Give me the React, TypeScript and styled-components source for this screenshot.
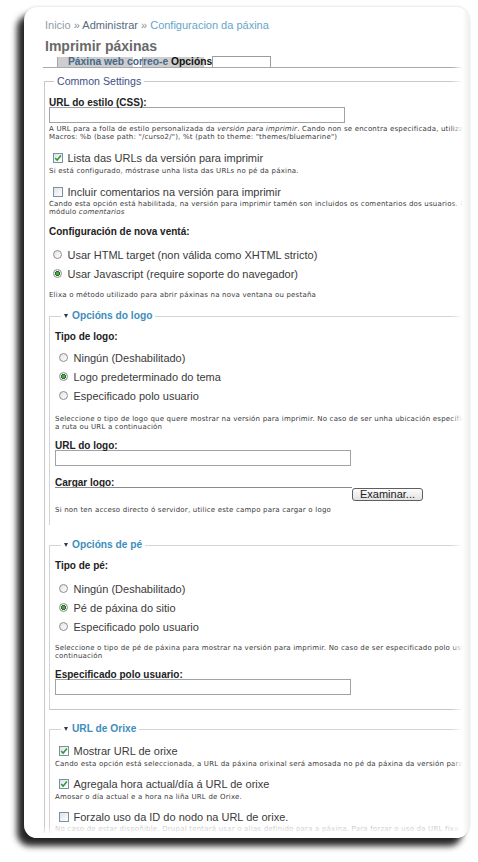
import React from 'react';
import styled, { createGlobalStyle } from 'styled-components';

const GlobalStyle = createGlobalStyle`
  html, body {
    margin: 0;
    padding: 0;
    background: #fff;
  }
  body {
    font-family: "Liberation Sans", Arial, sans-serif;
    color: #333;
  }
`;

const Page = styled.div`
  width: 478px;
  height: 862px;
  overflow: hidden;
  box-sizing: border-box;
  padding: 7px 0 0 24px;
`;

const Sheet = styled.div`
  position: relative;
  width: 445px;
  height: 831px;
  background: #fff;
  border-radius: 13px;
  overflow: hidden;
  box-shadow: -7px 8px 6px rgba(0, 0, 0, 0.85), 0 0 3px rgba(0, 0, 0, 0.2);

  &::after {
    content: '';
    position: absolute;
    top: 0;
    right: 0;
    bottom: 0;
    width: 18px;
    background: linear-gradient(to right, rgba(255, 255, 255, 0), #fff 65%, #f0f0f0);
    z-index: 2;
  }

  &::before {
    content: '';
    position: absolute;
    left: 0;
    right: 0;
    bottom: 0;
    height: 12px;
    background: linear-gradient(to bottom, rgba(255, 255, 255, 0), #fff 80%);
    z-index: 2;
  }
`;

const Content = styled.div`
  width: 520px;
  padding: 11px 0 0 20px;
`;

const Breadcrumb = styled.div`
  margin-left: 1px;
  font-size: 11px;
  line-height: 14px;
  white-space: nowrap;
  color: #8d8d8d;
`;

const Crumb = styled.span<{ $tone: 'home' | 'admin' | 'current' }>`
  color: ${(p) => (p.$tone === 'home' ? '#8e9ca8' : p.$tone === 'admin' ? '#566b7d' : '#66a6c6')};
`;

const Title = styled.h1`
  margin: 6px 0 0 1px;
  font-size: 14px;
  line-height: 16px;
  font-weight: bold;
  color: #696969;
`;

const TabBar = styled.div`
  display: flex;
  align-items: flex-end;
  height: 10px;
  margin: 3px 0 0 -1px;
  padding-left: 14px;
  border-bottom: 1px solid #a9a9a9;
`;

const TabStrip = styled.span`
  height: 10px;
  padding-left: 11px;
  font-size: 10.3px;
  font-weight: bold;
  line-height: 10px;
  white-space: nowrap;
  color: #44698a;
  background: linear-gradient(
    to right,
    #a8a8a8 0 1px,
    #cecece 1px 76px,
    transparent 76px 85px,
    #b0b0b0 85px 86px,
    #cecece 86px 147px,
    transparent 147px
  );
`;

const ActiveLabel = styled.span`
  color: #111;
`;

const ActiveTab = styled.span`
  box-sizing: border-box;
  width: 59px;
  height: 11px;
  border: 1px solid #9c9c9c;
  border-bottom: none;
  background: #fff;
`;

const Fieldset = styled.fieldset<{ $mt: number; $inner?: boolean; $pb?: number; $closed?: boolean }>`
  margin: ${(p) => p.$mt}px 0 0 0;
  padding: 0 0 ${(p) => p.$pb ?? 0}px ${(p) => (p.$inner ? 5 : 4)}px;
  min-width: 0;
  border: none;
  border-top: 1px solid ${(p) => (p.$inner ? '#d4d4d4' : '#c9c9c9')};
  border-left: 1px solid ${(p) => (p.$inner ? '#d4d4d4' : '#c9c9c9')};
  border-bottom: ${(p) => (p.$closed ? '1px solid #c6c6c6' : 'none')};
`;

const Legend = styled.legend<{ $inner?: boolean }>`
  display: flex;
  align-items: center;
  gap: 4px;
  margin-left: ${(p) => (p.$inner ? 6 : 5)}px;
  padding: 0 3px;
  height: 14px;
  font-size: ${(p) => (p.$inner ? '10.2px' : '10.6px')};
  font-weight: ${(p) => (p.$inner ? 'bold' : 'normal')};
  line-height: 14px;
  white-space: nowrap;
  color: ${(p) => (p.$inner ? '#3d8ebd' : '#3f4f86')};
`;

const Caret = styled.span`
  width: 0;
  height: 0;
  border-left: 2.5px solid transparent;
  border-right: 2.5px solid transparent;
  border-top: 4px solid #2c3b4c;
`;

const FieldLabel = styled.div<{ $mt: number }>`
  margin-top: ${(p) => p.$mt}px;
  font-size: 10px;
  font-weight: bold;
  line-height: 10px;
  white-space: nowrap;
  color: #222;
`;

const TextInput = styled.input<{ $mt?: number }>`
  display: block;
  box-sizing: border-box;
  width: 296px;
  height: 16px;
  margin: ${(p) => p.$mt ?? -1}px 0 0 0;
  padding: 0;
  border: 1px solid #9ea3a8;
  background: #fff;
`;

const Desc = styled.div<{ $mt: number; $faded?: boolean }>`
  margin-top: ${(p) => p.$mt}px;
  font-family: "DejaVu Sans", Verdana, sans-serif;
  font-size: 7px;
  line-height: 8px;
  letter-spacing: 0.2px;
  white-space: nowrap;
  color: ${(p) => (p.$faded ? '#c4c4c4' : '#3a3a3a')};

  em {
    font-style: italic;
  }
`;

const OptionList = styled.div<{ $mt: number }>`
  margin-top: ${(p) => p.$mt}px;
`;

const OptionRow = styled.label<{ $h: number; $mt?: number }>`
  display: flex;
  align-items: center;
  height: ${(p) => p.$h}px;
  margin-top: ${(p) => p.$mt ?? 0}px;
  padding-left: 3.5px;
  font-size: 11px;
  white-space: nowrap;
  color: #3a3a3a;
`;

const CheckBox = styled.span`
  display: flex;
  align-items: center;
  justify-content: center;
  box-sizing: border-box;
  width: 10px;
  height: 10px;
  margin-right: 5px;
  border: 1px solid #7d8fa3;
  background: linear-gradient(135deg, #dfe3e6, #fff);
`;

const RadioDot = styled.span<{ $on?: boolean }>`
  box-sizing: border-box;
  width: 9px;
  height: 9px;
  margin-right: 6px;
  border: 1px solid #8e8e8e;
  border-radius: 50%;
  background: ${(p) =>
    p.$on
      ? 'radial-gradient(circle, #3fae3f 0 1.5px, #2a6a2a 1.6px 2.3px, #f2f2f2 2.4px)'
      : 'linear-gradient(135deg, #e2e2e2, #fff)'};
`;

const FileRow = styled.div`
  display: flex;
  align-items: flex-start;
  margin-top: -1px;
`;

const FileField = styled.span`
  width: 297px;
  border-top: 1px solid #8a8a8a;
`;

const BrowseButton = styled.button`
  box-sizing: border-box;
  width: 71px;
  height: 13px;
  margin-top: 1px;
  padding: 0;
  border: 1px solid #5f5f5f;
  border-radius: 3px;
  background: linear-gradient(#fcfcfc, #e2e2e2);
  font-family: "Liberation Sans", Arial, sans-serif;
  font-size: 11px;
  line-height: 11px;
  color: #222;
`;

const Check = ({ on }: { on?: boolean }) => (
  <CheckBox>
    {on && (
      <svg width="8" height="8" viewBox="0 0 8 8">
        <path d="M1.2 4.1 L3.2 6.1 L6.9 1.6" fill="none" stroke="#2f9a35" strokeWidth="1.5" />
      </svg>
    )}
  </CheckBox>
);

const Radio = ({ on, label, mt }: { on?: boolean; label: string; mt?: number }) => (
  <OptionRow $h={19} $mt={mt}>
    <RadioDot $on={on} />
    {label}
  </OptionRow>
);

export default function App() {
  return (
    <>
      <GlobalStyle />
      <Page>
        <Sheet>
          <Content>
            <Breadcrumb>
              <Crumb $tone="home">Inicio</Crumb> » <Crumb $tone="admin">Administrar</Crumb> »{' '}
              <Crumb $tone="current">Configuracion da páxina</Crumb>
            </Breadcrumb>
            <Title>Imprimir páxinas</Title>
            <TabBar>
              <TabStrip>
                Páxina web correo-e <ActiveLabel>Opcións</ActiveLabel>
              </TabStrip>
              <ActiveTab />
            </TabBar>

            <Fieldset $mt={6}>
              <Legend>Common Settings</Legend>

              <FieldLabel $mt={10}>URL do estilo (CSS):</FieldLabel>
              <TextInput readOnly />
              <Desc $mt={2}>
                A URL para a folla de estilo personalizada da <em>versión para imprimir</em>. Cando non se encontra especificada, utilizase a predeterminada.
                <br />
                Macros: %b (base path: "/curso2/"), %t (path to theme: "themes/bluemarine")
              </Desc>

              <OptionRow $h={14} $mt={10}>
                <Check on />
                Lista das URLs da versión para imprimir
              </OptionRow>
              <Desc $mt={2}>Si está configurado, móstrase unha lista das URLs no pé da páxina.</Desc>

              <OptionRow $h={14} $mt={10}>
                <Check />
                Incluir comentarios na versión para imprimir
              </OptionRow>
              <Desc $mt={1}>
                Cando esta opción está habilitada, na versión para imprimir tamén son incluidos os comentarios dos usuarios. Require o
                <br />
                módulo <em>comentarios</em>
              </Desc>

              <FieldLabel $mt={11}>Configuración de nova ventá:</FieldLabel>
              <OptionList $mt={8}>
                <Radio label="Usar HTML target (non válida como XHTML stricto)" />
                <Radio on label="Usar Javascript (require soporte do navegador)" />
              </OptionList>
              <Desc $mt={8}>Elixa o método utilizado para abrir páxinas na nova ventana ou pestaña</Desc>

              <Fieldset $mt={10} $inner $pb={11}>
                <Legend $inner>
                  <Caret />
                  Opcións do logo
                </Legend>
                <FieldLabel $mt={9}>Tipo de logo:</FieldLabel>
                <OptionList $mt={6}>
                  <Radio label="Ningún (Deshabilitado)" />
                  <Radio on label="Logo predeterminado do tema" />
                  <Radio label="Especificado polo usuario" />
                </OptionList>
                <Desc $mt={10}>
                  Seleccione o tipo de logo que quere mostrar na versión para imprimir. No caso de ser unha ubicación específica, introduza
                  <br />a ruta ou URL a continuación
                </Desc>

                <FieldLabel $mt={10}>URL do logo:</FieldLabel>
                <TextInput readOnly />

                <FieldLabel $mt={12}>Cargar logo:</FieldLabel>
                <FileRow>
                  <FileField />
                  <BrowseButton type="button">Examinar...</BrowseButton>
                </FileRow>
                <Desc $mt={5}>Si non ten acceso directo ó servidor, utilice este campo para cargar o logo</Desc>
              </Fieldset>

              <Fieldset $mt={13} $inner $pb={14} $closed>
                <Legend $inner>
                  <Caret />
                  Opcións de pé
                </Legend>
                <FieldLabel $mt={9}>Tipo de pé:</FieldLabel>
                <OptionList $mt={8}>
                  <Radio label="Ningún (Deshabilitado)" />
                  <Radio on label="Pé de páxina do sitio" />
                  <Radio label="Especificado polo usuario" />
                </OptionList>
                <Desc $mt={8}>
                  Seleccione o tipo de pé de páxina para mostrar na versión para imprimir. No caso de ser especificado polo usuario, introdúzao a
                  <br />
                  continuación
                </Desc>

                <FieldLabel $mt={9.5}>Especificado polo usuario:</FieldLabel>
                <TextInput readOnly $mt={-0.5} />
              </Fieldset>

              <Fieldset $mt={12} $inner>
                <Legend $inner>
                  <Caret />
                  URL de Orixe
                </Legend>
                <OptionRow $h={14} $mt={8}>
                  <Check on />
                  Mostrar URL de orixe
                </OptionRow>
                <Desc $mt={2}>
                  Cando esta opción está seleccionada, a URL da páxina orixinal será amosada no pé da páxina da versión para imprimir.
                </Desc>

                <OptionRow $h={14} $mt={9}>
                  <Check on />
                  Agregala hora actual/día á URL de orixe
                </OptionRow>
                <Desc $mt={2}>Amosar o día actual e a hora na liña URL de Orixe.</Desc>

                <OptionRow $h={14} $mt={9}>
                  <Check />
                  Forzalo uso da ID do nodo na URL de orixe.
                </OptionRow>
                <Desc $mt={1} $faded>
                  No caso de estar dispoñible, Drupal tentará usar o alias definido para a páxina. Para forzar o uso da URL fixa
                </Desc>
              </Fieldset>
            </Fieldset>
          </Content>
        </Sheet>
      </Page>
    </>
  );
}
